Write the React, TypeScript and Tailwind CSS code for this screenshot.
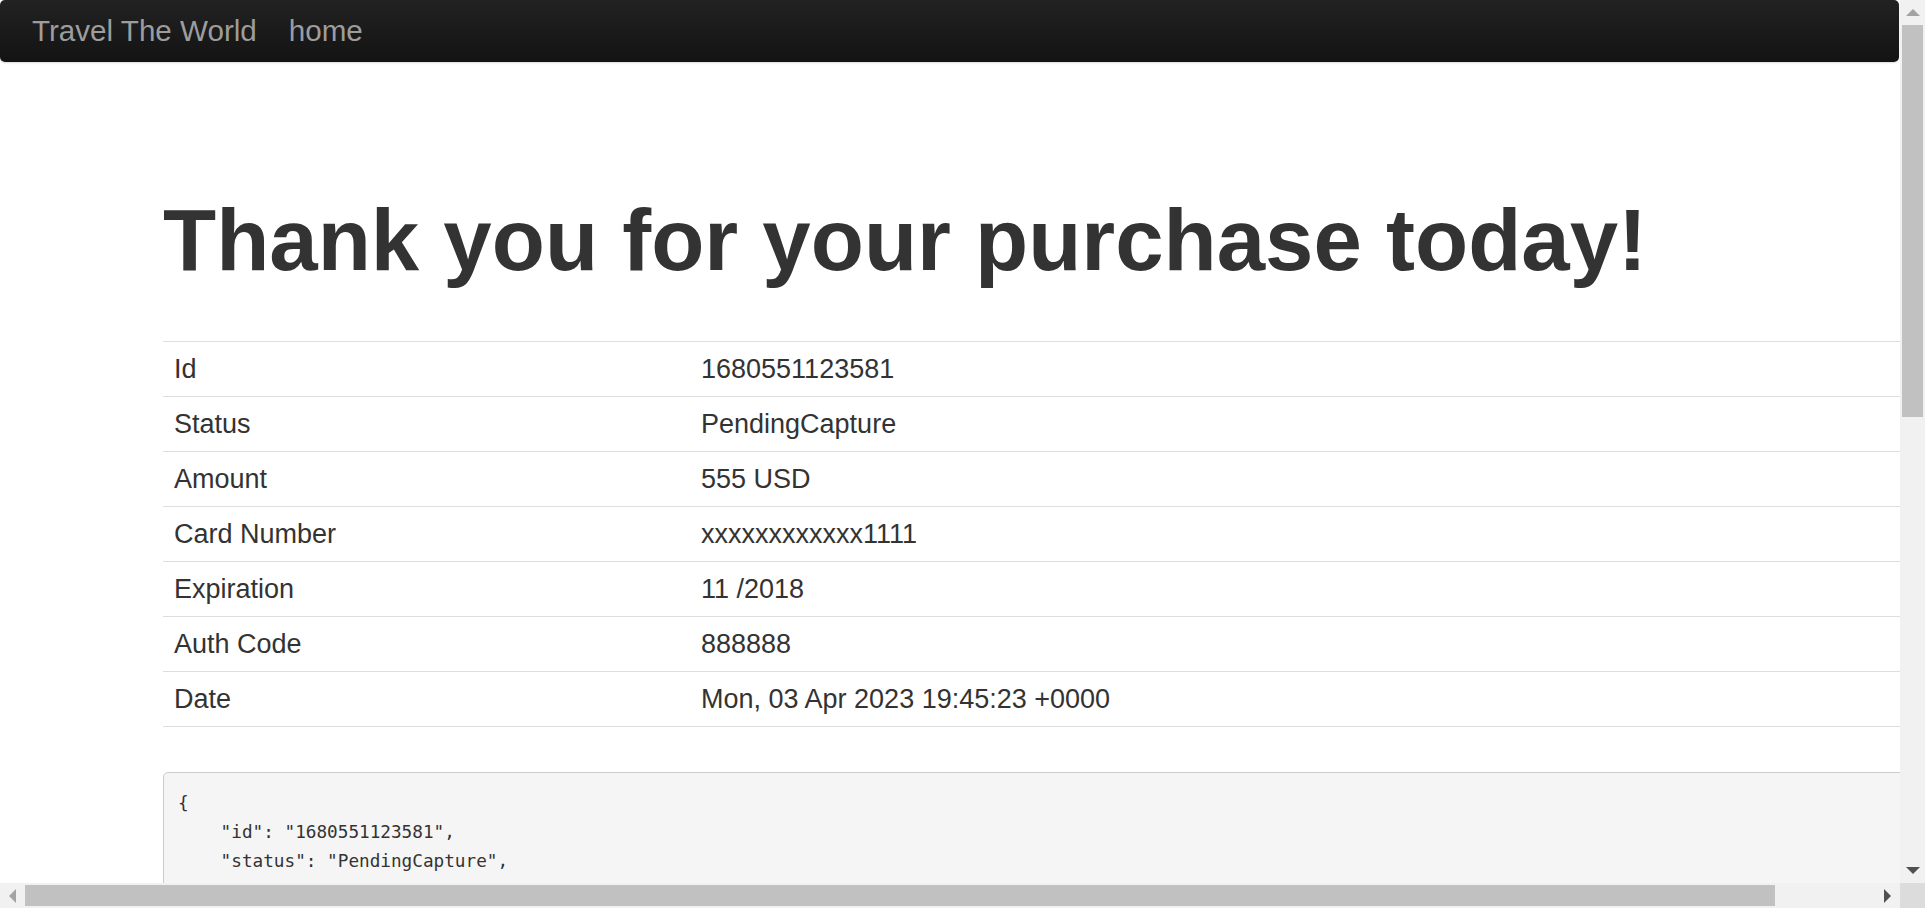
const rows: [string, string][] = [
  ['Id', '1680551123581'],
  ['Status', 'PendingCapture'],
  ['Amount', '555 USD'],
  ['Card Number', 'xxxxxxxxxxxx1111'],
  ['Expiration', '11 /2018'],
  ['Auth Code', '888888'],
  ['Date', 'Mon, 03 Apr 2023 19:45:23 +0000'],
];

// only the part of the response above the fold is visible
const json = `{
    "id": "1680551123581",
    "status": "PendingCapture",`;

function Arrow({ dir, dark }: { dir: 'up' | 'down' | 'left' | 'right'; dark?: boolean }) {
  const pts = {
    up: '0,7 7,0 14,7',
    down: '0,0 14,0 7,7',
    left: '7,0 7,14 0,7',
    right: '0,0 0,14 7,7',
  }[dir];
  const horiz = dir === 'up' || dir === 'down';
  return (
    <svg width={horiz ? 14 : 7} height={horiz ? 7 : 14} viewBox={horiz ? '0 0 14 7' : '0 0 7 14'}>
      <polygon points={pts} fill={dark ? '#505050' : '#a3a3a3'} />
    </svg>
  );
}

export default function App() {
  return (
    <div className="w-[1925px] h-[908px] overflow-hidden flex flex-col bg-white" style={{ fontFamily: '"Liberation Sans", Arial, sans-serif' }}>
      <div className="flex flex-1 min-h-0">
        {/* page */}
        <div className="flex-1 overflow-hidden">
          <nav className="w-[1899px] h-[62px] rounded-[5px] bg-gradient-to-b from-[#222222] to-[#131313] flex items-center pl-[32px] gap-[32px] text-[29.6px] text-[#9d9d9d] shadow-[0_1px_2px_rgba(0,0,0,0.15)]">
            <span className="leading-none">Travel The World</span>
            <span className="leading-none">home</span>
          </nav>

          <div className="pl-[163px] w-[2008px]">
            <h1 className="mt-[130px] text-[87px] leading-[96px] font-bold text-[#333]">
              Thank you for your purchase today!
            </h1>

            <div className="mt-[53px] w-[1845px] border-b border-[#ddd] text-[27px] text-[#333]">
              {rows.map(([label, value]) => (
                <div key={label} className="flex h-[55px] items-center border-t border-[#ddd] leading-[37px]">
                  <div className="w-[527px] pl-[11px]">{label}</div>
                  <div className="pl-[11px]">{value}</div>
                </div>
              ))}
            </div>

            <pre
              className="mt-[45px] w-[1845px] h-[200px] bg-[#f5f5f5] border border-[#ccc] rounded-[5px] pt-[16px] pl-[14px] text-[17.7px] leading-[29px] text-[#333]"
              style={{ fontFamily: '"DejaVu Sans Mono", "Liberation Mono", monospace' }}
            >
              {json}
            </pre>
          </div>
        </div>

        {/* vertical scrollbar */}
        <div className="w-[25px] bg-[#f1f1f1] flex flex-col items-center">
          <div className="h-[25px] flex items-center justify-center">
            <Arrow dir="up" />
          </div>
          <div className="w-[21px] h-[392px] bg-[#c1c1c1]" />
          <div className="flex-1" />
          <div className="h-[25px] flex items-center justify-center">
            <Arrow dir="down" dark />
          </div>
        </div>
      </div>

      {/* horizontal scrollbar */}
      <div className="flex h-[25px]">
        <div className="flex-1 bg-[#f1f1f1] flex items-center">
          <div className="w-[25px] flex items-center justify-center">
            <Arrow dir="left" />
          </div>
          <div className="w-[1750px] h-[21px] bg-[#c1c1c1]" />
          <div className="flex-1" />
          <div className="w-[25px] flex items-center justify-center">
            <Arrow dir="right" dark />
          </div>
        </div>
        <div className="w-[25px] bg-[#dcdcdc]" />
      </div>
    </div>
  );
}
